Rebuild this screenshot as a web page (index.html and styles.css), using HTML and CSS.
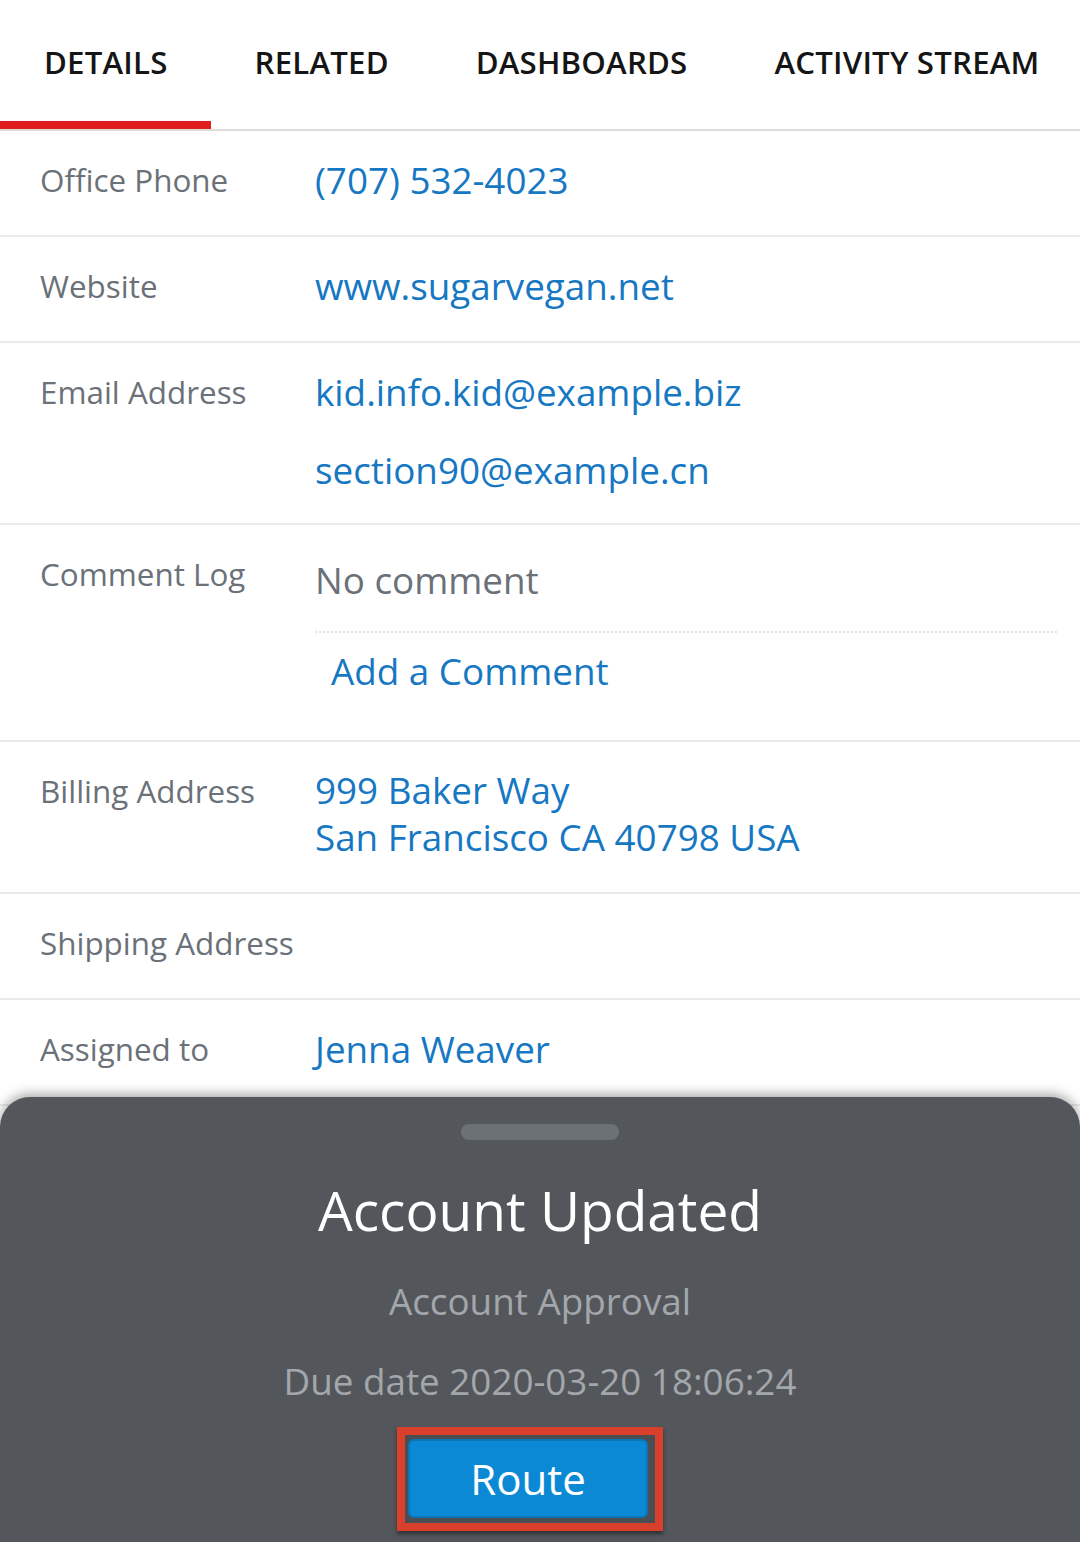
FILE: index.html
```html
<!DOCTYPE html>
<html lang="en">
<head>
<meta charset="utf-8">
<title>Account Details</title>
<link rel="stylesheet" href="styles.css">
</head>
<body>
<div class="screen">
  <nav class="tabs">
    <div class="tab active">DETAILS</div>
    <div class="tab">RELATED</div>
    <div class="tab">DASHBOARDS</div>
    <div class="tab">ACTIVITY STREAM</div>
  </nav>

  <div class="fields">
    <div class="row">
      <div class="label">Office Phone</div>
      <div class="value"><span class="link">(707) 532-4023</span></div>
    </div>
    <div class="row">
      <div class="label">Website</div>
      <div class="value"><span class="link">www.sugarvegan.net</span></div>
    </div>
    <div class="row row-email">
      <div class="label">Email Address</div>
      <div class="value stack">
        <span class="link">kid.info.kid@example.biz</span>
        <span class="link">section90@example.cn</span>
      </div>
    </div>
    <div class="row row-comment">
      <div class="label">Comment Log</div>
      <div class="value">
        <div class="no-comment">No comment</div>
        <div class="add-comment link">Add a Comment</div>
      </div>
    </div>
    <div class="row row-address">
      <div class="label">Billing Address</div>
      <div class="value address">
        <span class="link">999 Baker Way</span>
        <span class="link">San Francisco CA 40798 USA</span>
      </div>
    </div>
    <div class="row">
      <div class="label">Shipping Address</div>
      <div class="value"></div>
    </div>
    <div class="row">
      <div class="label">Assigned to</div>
      <div class="value"><span class="link">Jenna Weaver</span></div>
    </div>
  </div>

  <section class="sheet">
    <div class="handle"></div>
    <h1 class="sheet-title">Account Updated</h1>
    <p class="sheet-sub">Account Approval</p>
    <p class="sheet-sub due">Due date 2020-03-20 18:06:24</p>
    <div class="highlight">
      <button class="route-btn">Route</button>
    </div>
  </section>
</div>
</body>
</html>
```

FILE: styles.css
```css
* { box-sizing: border-box; }

html, body {
  margin: 0;
  padding: 0;
  background: #ffffff;
}

body {
  font-family: "Open Sans", "Noto Sans", "Liberation Sans", sans-serif;
  width: 1080px;
  height: 1542px;
  overflow: hidden;
}

.screen {
  position: relative;
  width: 1080px;
  height: 1542px;
  overflow: hidden;
}

/* Tabs */
.tabs {
  display: flex;
  border-bottom: 2px solid #dcdcdc;
}

.tab {
  padding: 4px 43px 0 44px;
  line-height: 117px;
  font-size: 31.2px;
  font-weight: 600;
  letter-spacing: 0.2px;
  color: #151515;
  border-bottom: 8px solid transparent;
  white-space: nowrap;
}

.tab.active {
  border-bottom-color: #e01e1e;
}

/* Field rows */
.row {
  display: grid;
  grid-template-columns: 275px 1fr;
  padding: 25px 24px 31px 40px;
  border-bottom: 2px solid #e9eaeb;
  align-items: start;
}

.label {
  font-size: 31.4px;
  line-height: 48px;
  color: #6b7178;
}

.value {
  font-size: 36.8px;
  line-height: 48px;
  min-height: 48px;
}

.link {
  color: #1677c3;
}

.stack {
  display: flex;
  flex-direction: column;
  gap: 30px;
}

.row-email {
  padding-bottom: 29px;
}

.row-comment {
  padding-bottom: 45px;
}

.no-comment {
  color: #6b7178;
  padding-top: 6px;
  padding-bottom: 27px;
  border-bottom: 2px dotted #e2e4e6;
  margin-right: -1px;
}

.add-comment {
  margin-top: 14px;
  padding-left: 16px;
}

.row-address {
  padding-bottom: 31px;
}

.address {
  display: flex;
  flex-direction: column;
  line-height: 47px;
}

/* Bottom sheet overlay */
.sheet {
  position: absolute;
  left: 0;
  right: 0;
  bottom: 0;
  height: 445px;
  background: #53575b;
  border-radius: 30px 30px 0 0;
  box-shadow: 0 -3px 12px rgba(0, 0, 0, 0.35);
  display: flex;
  flex-direction: column;
  align-items: center;
}

.handle {
  margin-top: 27px;
  width: 158px;
  height: 16px;
  border-radius: 8px;
  background: #6c7176;
}

.sheet-title {
  margin: 35px 0 0;
  font-size: 55px;
  line-height: 70px;
  font-weight: 400;
  color: #ffffff;
}

.sheet-sub {
  margin: 32px 0 0;
  font-size: 36.8px;
  line-height: 48px;
  color: #a3a7ab;
}

.sheet-sub.due {
  margin-top: 32px;
}

.highlight {
  margin-top: 22px;
  align-self: flex-start;
  margin-left: 397px;
  width: 266px;
  height: 104px;
  border: 8px solid #d9402b;
  padding: 4px 7px 5px 3px;
  background: #4a4e52;
  box-shadow: 0 3px 4px rgba(0, 0, 0, 0.45);
}

.route-btn {
  display: block;
  width: 100%;
  height: 100%;
  border: 2px solid #0a74b8;
  border-radius: 6px;
  background: #0c89d5;
  color: #ffffff;
  font-family: "Open Sans", "Noto Sans", "Liberation Sans", sans-serif;
  font-size: 42px;
  line-height: 1;
  padding: 0;
}
```
